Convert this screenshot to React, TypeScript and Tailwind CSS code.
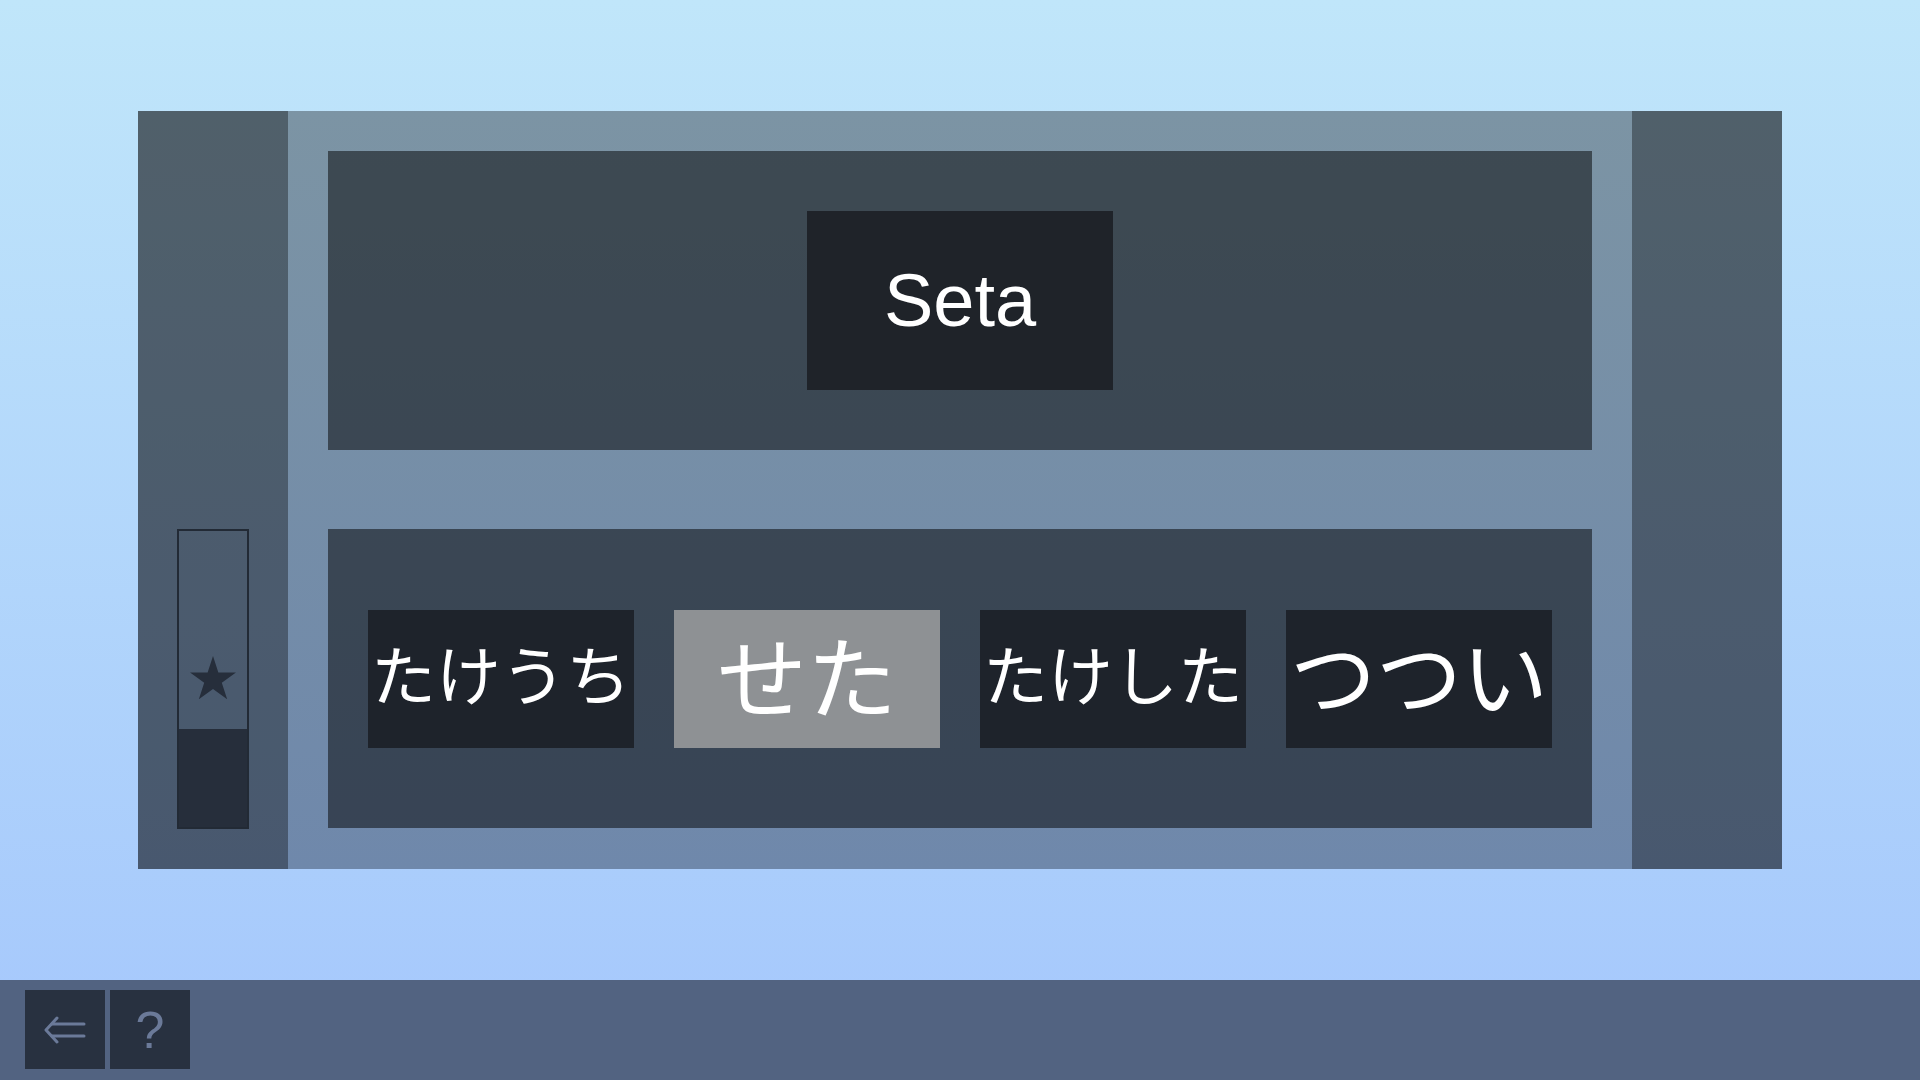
const choices = [
  { label: "たけうち", size: "text-[65px]", active: false },
  { label: "せた", size: "text-[90px]", active: true },
  { label: "たけした", size: "text-[65px]", active: false },
  { label: "つつい", size: "text-[86px]", active: false },
];

function Star() {
  return (
    <svg width="46" height="44" viewBox="0 0 24 23" className="fill-[#262e3b]">
      <polygon points="12,0 14.8,8.6 24,8.6 16.6,14 19.4,22.6 12,17.3 4.6,22.6 7.4,14 0,8.6 9.2,8.6" />
    </svg>
  );
}

function BackArrow() {
  return (
    <svg width="42" height="30" viewBox="0 0 42 30" fill="none" stroke="#6b7a99" strokeWidth="3" strokeLinecap="round" strokeLinejoin="round">
      <path d="M13 3 L2 15 L13 27" />
      <path d="M8 9 H40" />
      <path d="M8 21 H40" />
    </svg>
  );
}

export default function App() {
  return (
    <div className="h-screen w-full flex flex-col bg-gradient-to-b from-[#c0e6fa] to-[#a5c7fc] font-['Liberation_Sans',sans-serif] overflow-hidden">
      <main className="flex-1 flex items-center justify-center">
        <div className="w-[1644px] h-[758px] flex bg-gradient-to-b from-[#7c94a4] to-[#6f88ab]">
          {/* left column with progress */}
          <div className="w-[150px] bg-black/35 flex flex-col items-center justify-end pb-[40px]">
            <div className="w-[72px] h-[300px] border-2 border-[#222a35] flex flex-col">
              <div className="flex-1 flex items-end justify-center pb-[29px]">
                <Star />
              </div>
              <div className="h-[98px] bg-[#262e3b]" />
            </div>
          </div>

          {/* middle */}
          <div className="flex-1 flex flex-col gap-[79px] p-[40px]">
            <section className="h-[299px] bg-black/50 flex items-center justify-center">
              <div className="w-[306px] h-[179px] bg-[#1f2329] flex items-center justify-center">
                <span className="text-white text-[74px] leading-none">Seta</span>
              </div>
            </section>
            <section className="h-[299px] bg-black/50 flex items-center justify-center gap-[40px]">
              {choices.map((c) => (
                <button
                  key={c.label}
                  className={`w-[266px] h-[138px] pb-[12px] flex items-center justify-center text-white leading-none whitespace-nowrap font-['Noto_Sans_CJK_JP',sans-serif] ${c.size} ${c.active ? "bg-[#8e9194]" : "bg-[#1e232b]"}`}
                >
                  {c.label}
                </button>
              ))}
            </section>
          </div>

          {/* right column */}
          <div className="w-[150px] bg-black/35" />
        </div>
      </main>

      <footer className="h-[100px] bg-[#526381] flex items-start gap-[5px] px-[25px] pt-[10px]">
        <button className="w-[80px] h-[79px] bg-[#283140] flex items-center justify-center">
          <BackArrow />
        </button>
        <button className="w-[80px] h-[79px] bg-[#283140] flex items-center justify-center text-[52px] leading-none text-[#6b7a99]">
          ?
        </button>
      </footer>
    </div>
  );
}
